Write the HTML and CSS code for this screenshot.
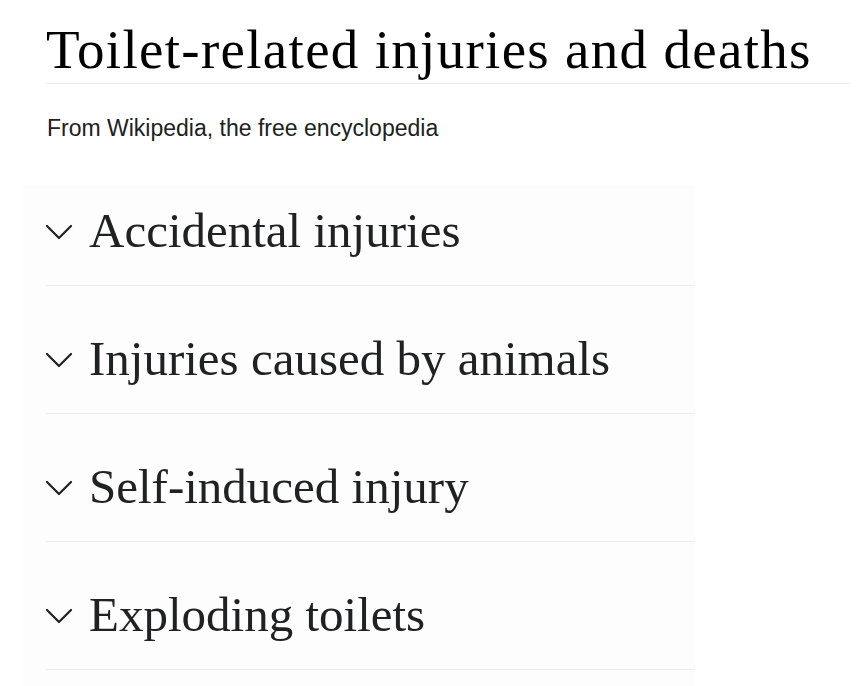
FILE: index.html
```html
<!DOCTYPE html>
<html lang="en">
<head>
<meta charset="utf-8">
<title>Toilet-related injuries and deaths</title>
<link rel="stylesheet" href="styles.css">
</head>
<body>
<div class="page">
  <header class="page-header">
    <h1 class="page-title">Toilet-related injuries and deaths</h1>
  </header>
  <div class="tagline">From Wikipedia, the free encyclopedia</div>
  <div class="sections">
    <section class="section">
      <h2 class="section-heading">
        <svg class="chevron" viewBox="0 0 28 16" width="28" height="16" aria-hidden="true"><path d="M2 2 L14 14 L26 2" fill="none" stroke="#202122" stroke-width="2.2" stroke-linecap="round" stroke-linejoin="round"/></svg>
        <span>Accidental injuries</span>
      </h2>
    </section>
    <section class="section">
      <h2 class="section-heading">
        <svg class="chevron" viewBox="0 0 28 16" width="28" height="16" aria-hidden="true"><path d="M2 2 L14 14 L26 2" fill="none" stroke="#202122" stroke-width="2.2" stroke-linecap="round" stroke-linejoin="round"/></svg>
        <span>Injuries caused by animals</span>
      </h2>
    </section>
    <section class="section">
      <h2 class="section-heading">
        <svg class="chevron" viewBox="0 0 28 16" width="28" height="16" aria-hidden="true"><path d="M2 2 L14 14 L26 2" fill="none" stroke="#202122" stroke-width="2.2" stroke-linecap="round" stroke-linejoin="round"/></svg>
        <span>Self-induced injury</span>
      </h2>
    </section>
    <section class="section">
      <h2 class="section-heading">
        <svg class="chevron" viewBox="0 0 28 16" width="28" height="16" aria-hidden="true"><path d="M2 2 L14 14 L26 2" fill="none" stroke="#202122" stroke-width="2.2" stroke-linecap="round" stroke-linejoin="round"/></svg>
        <span>Exploding toilets</span>
      </h2>
    </section>
  </div>
</div>
</body>
</html>
```

FILE: styles.css
```css
html, body {
  margin: 0;
  padding: 0;
  background: #ffffff;
}

.page {
  padding: 0 16px 0 46px;
  overflow: hidden;
  height: 686px;
}

.page-header {
  padding-top: 23px;
  height: 60px;
  border-bottom: 1px solid #eaecf0;
}

.page-title {
  margin: 0;
  font-family: "Liberation Serif", "Times New Roman", serif;
  font-weight: normal;
  font-size: 55px;
  line-height: 54px;
  letter-spacing: 1.3px;
  color: #000000;
  white-space: nowrap;
}

.tagline {
  margin-top: 31px;
  padding-left: 1px;
  font-family: "Liberation Sans", Arial, sans-serif;
  font-size: 23px;
  line-height: 26px;
  color: #202122;
}

.sections {
  margin-top: 44px;
  margin-left: -23px;
  width: 672px;
  padding-left: 23px;
  box-sizing: border-box;
  background: #fdfdfd;
  display: flex;
  flex-direction: column;
  gap: 27px;
  min-height: 520px;
}

.section {
  padding: 22px 0 30px;
  border-bottom: 1px solid #eaecf0;
}

.section-heading {
  margin: 0;
  display: flex;
  align-items: center;
  gap: 16px;
  font-family: "Liberation Serif", "Times New Roman", serif;
  font-weight: normal;
  font-size: 49px;
  line-height: 48px;
  color: #202122;
}

.chevron {
  flex: none;
  margin-left: -1px;
  margin-top: 1px;
}
```
